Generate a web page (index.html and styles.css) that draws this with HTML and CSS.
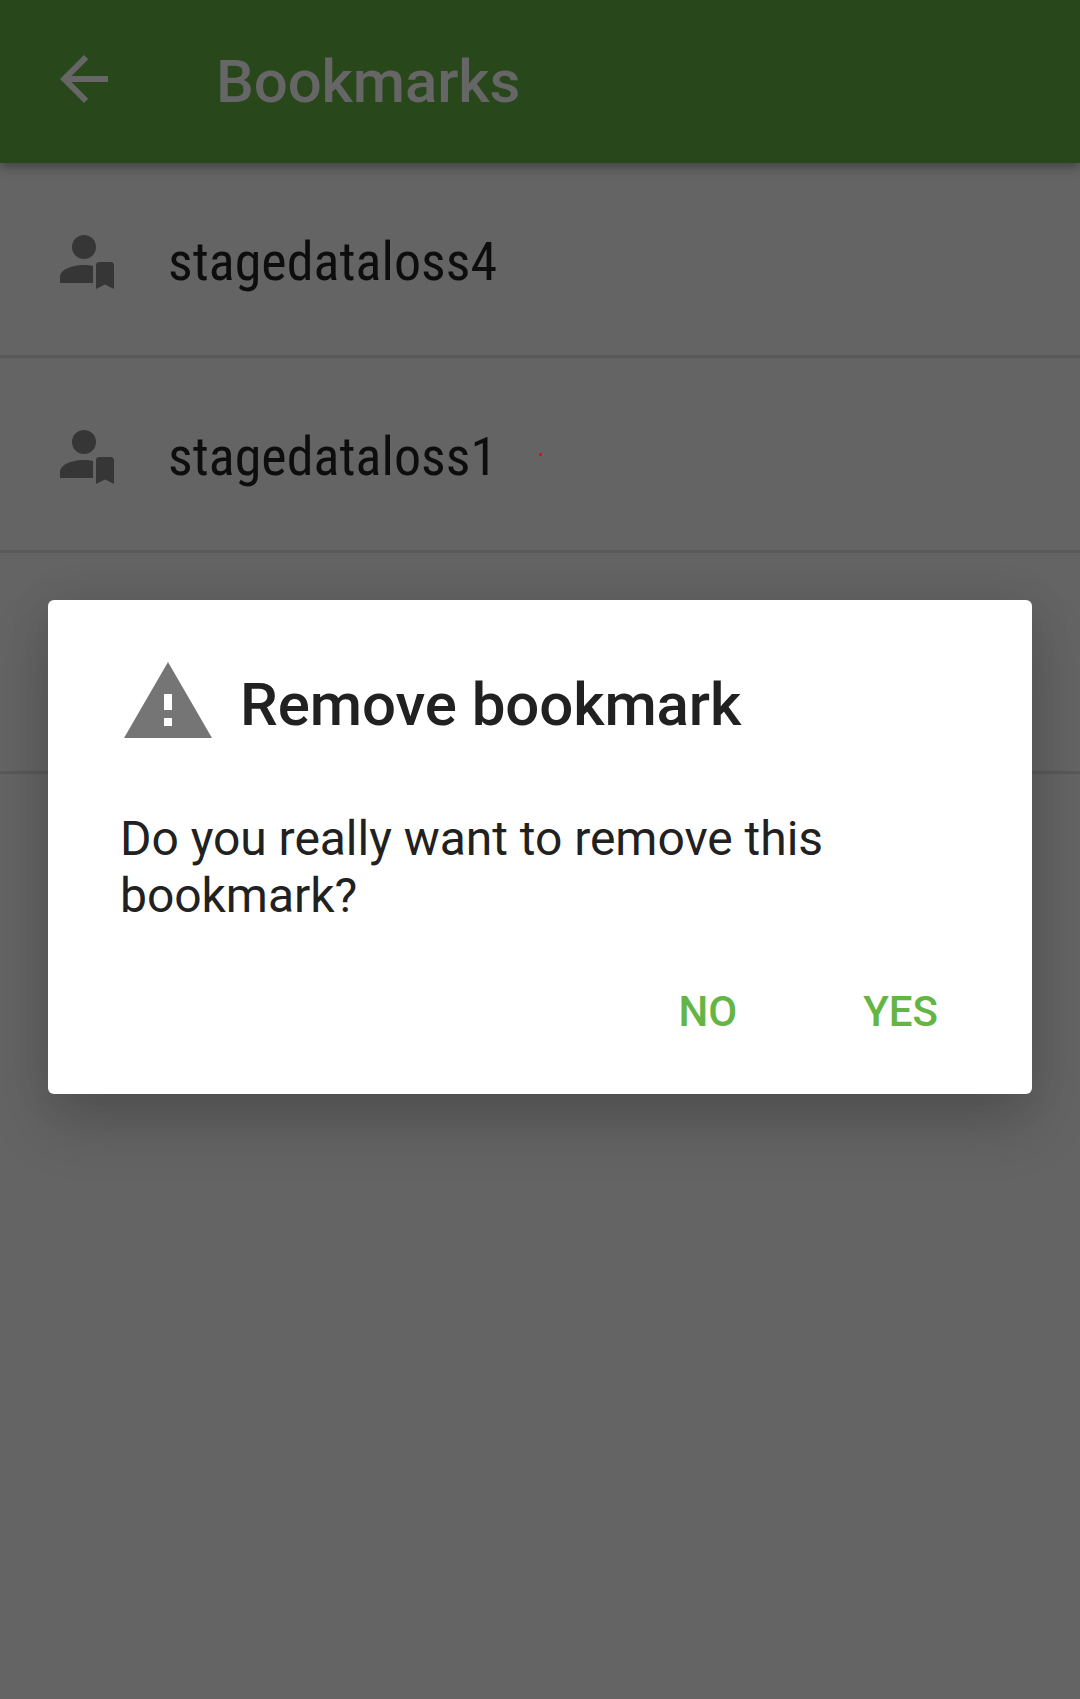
FILE: index.html
```html
<!DOCTYPE html>
<html lang="en">
<head>
<meta charset="utf-8">
<title>Bookmarks</title>
<link rel="stylesheet" href="styles.css">
</head>
<body>
<div class="screen">
  <header class="toolbar">
    <svg class="icon" viewBox="0 0 24 24"><path d="M20 11H7.83l5.59-5.59L12 4l-8 8 8 8 1.41-1.41L7.83 13H20z"/></svg>
    <h1 class="toolbar-title">Bookmarks</h1>
  </header>
  <ul class="list">
    <li class="row">
      <svg class="icon" viewBox="0 0 24 24"><circle cx="12" cy="8" r="4"/><path d="M15 14.3C14.1 14.1 13 14 12 14c-4.42 0-8 1.79-8 4v2h11zM17 13h4c.55 0 1 .45 1 1v8l-3-1.5-3 1.5v-8c0-.55.45-1 1-1z"/></svg>
      <span class="name">stagedataloss4</span>
    </li>
    <li class="row">
      <svg class="icon" viewBox="0 0 24 24"><circle cx="12" cy="8" r="4"/><path d="M15 14.3C14.1 14.1 13 14 12 14c-4.42 0-8 1.79-8 4v2h11zM17 13h4c.55 0 1 .45 1 1v8l-3-1.5-3 1.5v-8c0-.55.45-1 1-1z"/></svg>
      <span class="name">stagedataloss1</span>
      <i class="marker"></i>
    </li>
    <li class="row row-tall"></li>
  </ul>
  <div class="overlay">
    <section class="dialog" role="alertdialog">
      <div class="dialog-head">
        <svg class="warning" viewBox="0 0 24 24"><path d="M1 21h22L12 2 1 21zm12-3h-2v-2h2v2zm0-4h-2v-4h2v4z"/></svg>
        <h2 class="dialog-title">Remove bookmark</h2>
      </div>
      <p class="message">Do you really want to remove this bookmark?</p>
      <div class="actions">
        <button class="action">NO</button>
        <button class="action">YES</button>
      </div>
    </section>
  </div>
</div>
</body>
</html>
```
FILE: styles.css
```css
* { box-sizing: border-box; margin: 0; padding: 0; }
body { font-family: Roboto, sans-serif; background: #646464; }
.screen { position: relative; height: 1699px; overflow: hidden; }
.toolbar {
  position: relative;
  display: flex;
  align-items: center;
  gap: 96px;
  height: 163px;
  padding: 0 48px 5px;
  background: #28471b;
  color: #666;
  box-shadow: 0 4px 10px rgba(0, 0, 0, .34);
}
.icon { width: 72px; height: 72px; flex: none; fill: currentColor; }
.toolbar-title { font-size: 60px; font-weight: 500; line-height: 70px; letter-spacing: -.12px; padding-top: 5px; }
.list { list-style: none; }
.row {
  display: flex;
  align-items: center;
  height: 195px;
  padding: 0 48px;
  border-bottom: 3px solid #595959;
  color: #363636;
}
.row-tall { height: 221px; }
.name {
  width: 371px;
  margin-left: 48px;
  font-family: "Roboto Condensed", Roboto, sans-serif;
  font-stretch: 75%;
  font-size: 54px;
  line-height: 64px;
  letter-spacing: .06px;
  padding-top: 6px;
  color: #0d0d0d;
}
.marker { width: 3px; height: 3px; background: #ff0018; }
.overlay { position: absolute; inset: 0; padding: 600px 48px 0; }
.dialog {
  height: 494px;
  padding: 54px 72px 0;
  border-radius: 6px;
  background: #fff;
  color: #212121;
  box-shadow: 0 30px 60px rgba(0, 0, 0, .18), 0 0 45px rgba(0, 0, 0, .08);
}
.dialog-head { display: flex; align-items: center; gap: 24px; }
.warning { width: 96px; height: 96px; fill: #757575; }
.dialog-title { font-size: 60px; font-weight: 500; line-height: 70px; letter-spacing: -.08px; padding-top: 6px; }
.message { font-size: 48px; line-height: 57px; letter-spacing: -.04px; margin-top: 60px; }
.actions { display: flex; justify-content: flex-end; gap: 126px; margin-top: 40px; }
.action {
  border: 0;
  background: none;
  color: #65b545;
  font: 500 42px/96px Roboto, sans-serif;
}
.action:last-child { margin-right: 22px; }
```
